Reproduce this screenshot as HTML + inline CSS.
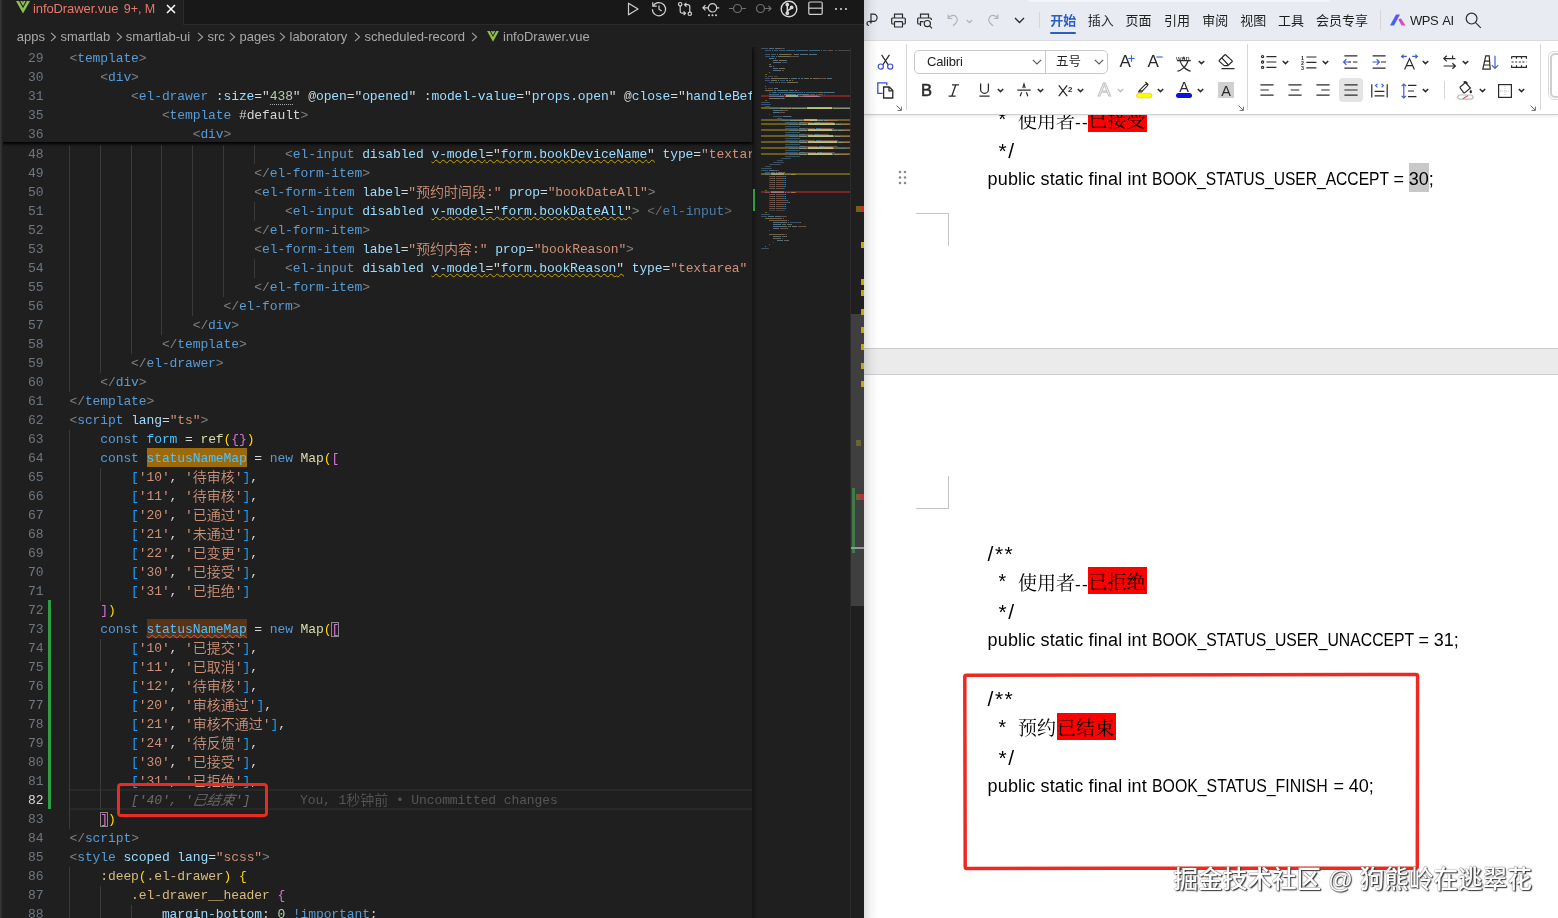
<!DOCTYPE html>
<html lang="zh-CN">
<head>
<meta charset="utf-8">
<title>infoDrawer.vue</title>
<style>
*{box-sizing:border-box;margin:0;padding:0}
html,body{width:1558px;height:918px;overflow:hidden;background:#fff}
body{position:relative;font-family:"Liberation Sans","Noto Sans CJK SC",sans-serif}
#vs,#wps{will-change:transform}
/* ---------- VS Code ---------- */
#vs{position:absolute;left:0;top:0;width:864px;height:918px;background:#1f1f1f;overflow:hidden;color:#d4d4d4}
#vs .edge{position:absolute;left:0;top:0;width:2.5px;height:918px;background:linear-gradient(90deg,#383838 0,#2c2c2c 50%,#222 80%,#1f1f1f 100%);z-index:9}
#tabs{z-index:6;position:absolute;left:0;top:-10px;width:864px;height:35px;background:#181818;border-bottom:1px solid #2b2b2b}
#tab{position:absolute;left:2px;top:0;width:182px;height:35px;background:#1f1f1f;border-right:1px solid #2b2b2b}
#tab .nm{position:absolute;left:31px;top:9.5px;font-size:13px;line-height:17px;color:#e8796d;white-space:nowrap;letter-spacing:-0.1px}
#tab .x{position:absolute;left:163.5px;top:13.5px}
#crumbs{z-index:6;position:absolute;left:0;top:25px;width:864px;height:22px;background:#1f1f1f;font-size:13px;line-height:23px;color:#a9a9a9;white-space:nowrap}
#crumbs span{position:absolute;top:0}
#crumbs svg{position:absolute}
#editor{position:absolute;left:0;top:0;width:752px;height:918px;overflow:hidden}
.row{position:absolute;left:0;width:760px;height:19px;line-height:19px;font-family:"Liberation Mono","Noto Sans CJK SC",monospace;font-size:13px;letter-spacing:-0.1px;white-space:pre}
.ln{position:absolute;left:0;width:43.5px;text-align:right;color:#6e7681}
.ln.cur{color:#d6d6d6}
.code{position:absolute;top:0}
.z{font-family:"Noto Sans CJK SC",sans-serif;font-weight:350;font-size:14px;letter-spacing:0;display:inline-block;line-height:19px;vertical-align:top;position:relative;top:-1.5px}
.g{color:#808080}.t{color:#569cd6}.a{color:#9cdcfe}.a2{color:#d4d4d4}.s{color:#ce9178}.w{color:#d4d4d4}
.g2{color:#6a6a6a}.t2{color:#4a7fae}
.k{color:#569cd6}.v{color:#4fc1ff}.f{color:#dcdcaa}.nu{color:#b5cea8}
.b1{color:#ffd700}.b2{color:#da70d6}.b3{color:#179fff}
.se{color:#d7ba7d}
.sq{color:#9cdcfe}
.gh{color:#6c6c6c;font-style:italic}
.gh .z{transform:skewX(-12deg)}
.gd{position:absolute;width:1px;background:#3a3a3a}
#sticky{position:absolute;left:2px;top:47px;width:750px;height:95px;background:#1f1f1f;box-shadow:0 2px 3px 0 #000;z-index:5;overflow:hidden}
#sticky .row{left:-2px}

.h1{background:#9c6a0a;padding:3.1px 0 1.2px}
.h2{padding:3.1px 0 1.2px;background:#5a3316;text-decoration:underline wavy #f14c4c 1px;text-underline-offset:1px;text-decoration-skip-ink:none}
.bm{outline:1px solid #888;outline-offset:-1px}
.sq{text-decoration:underline wavy #cca700 1px;text-underline-offset:.5px;text-decoration-skip-ink:none}
.nu.dot{border-bottom:1px dotted #aaa}
#curline{position:absolute;left:70px;top:789px;width:682px;height:21px;border-top:2px solid #282828;border-bottom:2px solid #282828}
#gitbar{position:absolute;left:48px;top:600px;width:3px;height:209px;background:#2ea043}
#blame{color:#565656;position:absolute;left:300px;top:0}
#redbox{position:absolute;left:116.5px;top:783px;width:151px;height:33.5px;border:3px solid #ec2a22;border-radius:4px;z-index:4}
#mini{position:absolute;left:752px;top:47px;width:98px;height:871px;background:#1f1f1f}
#mini .sh{position:absolute;left:0;top:0;width:6px;height:871px;background:linear-gradient(90deg,#000 0,#1f1f1f00 100%);opacity:.3}
#mini svg{position:absolute;left:9px;top:0}
#vscroll{position:absolute;left:850px;top:47px;width:14px;height:871px;background:#1f1f1f;border-left:1px solid #2b2b2b}
#vscroll i{position:absolute;display:block}
#vscroll .sl{left:0;top:267px;width:14px;height:292px;background:#4b4b4b;opacity:.75}
#tools{position:absolute;left:0;top:.5px}
#tools svg{position:absolute;top:0;overflow:visible}

/* ---------- WPS ---------- */
#wps{position:absolute;left:864px;top:0;width:694px;height:918px;background:#fff;overflow:hidden;color:#1a1a1a}
#wps svg{position:absolute;overflow:visible}
#wps .lsh{position:absolute;left:0;top:0;width:14px;height:918px;background:linear-gradient(90deg,rgba(0,0,0,.13),rgba(0,0,0,.04) 50%,rgba(0,0,0,0));z-index:20}
#wmenu{position:absolute;left:0;top:0;width:694px;height:39.5px;background:#e9ebf2;z-index:12}
#wmenu .mi{position:absolute;top:10.5px;font-size:13px;line-height:20px;color:#1f1f1f;white-space:nowrap;font-family:"Liberation Sans","Noto Sans CJK SC",sans-serif}
#wmenu .mi.act{color:#2b5fc7;font-weight:700}
.vsep{position:absolute;display:block;width:1px;background:#d6d6da}
#ribbon{position:absolute;left:0;top:39.5px;width:694px;height:75px;background:#fff;border-bottom:1px solid #cfcfcf;border-top:1px solid #d9dade;z-index:11;box-shadow:0 1px 3px rgba(0,0,0,.10)}
#ribbon>*{margin-top:-40.5px}
#ribbon .fbox{position:absolute;border:1px solid #c9c9c9;border-radius:5px;background:#fff}
#ribbon .fbox *{margin-top:0}
.gl{position:absolute;line-height:22px;color:#2b2b2b;white-space:nowrap}
#doc{position:absolute;left:0;top:0;width:694px;height:918px;background:#fff;z-index:1}
#doc .gap{position:absolute;left:0;top:348px;width:694px;height:27px;background:#ebebeb;border-top:1px solid #cdcdcd;border-bottom:1px solid #cdcdcd}
#doc .cm{position:absolute;display:block;background:#c4c4c4}
.dl{position:absolute;left:0;width:694px;height:29px;line-height:29px;font-size:18px;color:#000;white-space:pre}
.dl span{position:absolute;top:0}
.dl span span{position:static}
.lc{letter-spacing:.138px}
.uc{letter-spacing:0;display:inline-block;transform-origin:0 50%;transform:scaleX(.8668)}
.eq{letter-spacing:-.1px}
.sy{letter-spacing:1.5px;font-size:21px;margin-top:1.2px}
.st{font-size:19.5px;margin-top:.5px}
.cj{font-family:"Noto Serif CJK SC","Noto Sans CJK SC",serif;font-size:19px;letter-spacing:0}
.cj .dash{font-family:"Liberation Sans",sans-serif;font-size:17px;letter-spacing:1.4px}
.hl{background:#ff0000;height:27px;line-height:28px;top:.3px !important;padding:0 1.6px 0 .4px}
.sel{background:#c8c8c8;padding:5.6px .2px 3.600px .2px;margin:0 -.2px}
#wm{position:absolute;left:309.5px;top:864.2px;font-size:24.6px;line-height:32px;white-space:nowrap;color:#fff;font-family:"Liberation Sans","Noto Sans CJK SC",sans-serif;font-weight:500;text-shadow:1.2px 1.2px 1.2px #333,0 0 1.2px #666,0 0 1px #888;letter-spacing:0}
</style>
</head>
<body>
<div id="vs">
<div class="edge"></div>
<div id="editor">
<div id="curline"></div><div id="gitbar"></div>
<i class="gd" style="left:69px;top:145px;height:247px"></i><i class="gd" style="left:69px;top:430px;height:399px"></i><i class="gd" style="left:69px;top:867px;height:57px"></i><i class="gd" style="left:100px;top:145px;height:228px"></i><i class="gd" style="left:100px;top:468px;height:133px"></i><i class="gd" style="left:100px;top:639px;height:171px"></i><i class="gd" style="left:100px;top:886px;height:38px"></i><i class="gd" style="left:131px;top:145px;height:209px"></i><i class="gd" style="left:131px;top:905px;height:19px"></i><i class="gd" style="left:161px;top:145px;height:190px"></i><i class="gd" style="left:192px;top:145px;height:171px"></i><i class="gd" style="left:223px;top:145px;height:152px"></i><i class="gd" style="left:254px;top:145px;height:19px"></i><i class="gd" style="left:254px;top:202px;height:19px"></i><i class="gd" style="left:254px;top:259px;height:19px"></i>

<div class="row" style="top:145px"><span class="ln">48</span><span class="code" style="left:285.1px"><span class="g">&lt;</span><span class="t">el-input</span><span class="w"> </span><span class="a">disabled</span><span class="w"> </span><span class="sq"><span class="a">v-model</span><span class="w">="</span><span class="a">form.bookDeviceName</span><span class="w">"</span></span><span class="w"> </span><span class="a">type</span><span class="w">=</span><span class="s">"textar</span></span></div>
<div class="row" style="top:164px"><span class="ln">49</span><span class="code" style="left:254.3px"><span class="g">&lt;/</span><span class="t">el-form-item</span><span class="g">&gt;</span></span></div>
<div class="row" style="top:183px"><span class="ln">50</span><span class="code" style="left:254.3px"><span class="g">&lt;</span><span class="t">el-form-item</span><span class="w"> </span><span class="a">label</span><span class="w">=</span><span class="s">"<span class="z">预约时间段</span>:"</span><span class="w"> </span><span class="a">prop</span><span class="w">=</span><span class="s">"bookDateAll"</span><span class="g">&gt;</span></span></div>
<div class="row" style="top:202px"><span class="ln">51</span><span class="code" style="left:285.1px"><span class="g">&lt;</span><span class="t">el-input</span><span class="w"> </span><span class="a">disabled</span><span class="w"> </span><span class="sq"><span class="a">v-model</span><span class="w">="</span><span class="a">form.bookDateAll</span><span class="w">"</span></span><span class="g">&gt;</span><span class="w"> </span><span class="g2">&lt;/</span><span class="t2">el-input</span><span class="g2">&gt;</span></span></div>
<div class="row" style="top:221px"><span class="ln">52</span><span class="code" style="left:254.3px"><span class="g">&lt;/</span><span class="t">el-form-item</span><span class="g">&gt;</span></span></div>
<div class="row" style="top:240px"><span class="ln">53</span><span class="code" style="left:254.3px"><span class="g">&lt;</span><span class="t">el-form-item</span><span class="w"> </span><span class="a">label</span><span class="w">=</span><span class="s">"<span class="z">预约内容</span>:"</span><span class="w"> </span><span class="a">prop</span><span class="w">=</span><span class="s">"bookReason"</span><span class="g">&gt;</span></span></div>
<div class="row" style="top:259px"><span class="ln">54</span><span class="code" style="left:285.1px"><span class="g">&lt;</span><span class="t">el-input</span><span class="w"> </span><span class="a">disabled</span><span class="w"> </span><span class="sq"><span class="a">v-model</span><span class="w">="</span><span class="a">form.bookReason</span><span class="w">"</span></span><span class="w"> </span><span class="a">type</span><span class="w">=</span><span class="s">"textarea"</span></span></div>
<div class="row" style="top:278px"><span class="ln">55</span><span class="code" style="left:254.3px"><span class="g">&lt;/</span><span class="t">el-form-item</span><span class="g">&gt;</span></span></div>
<div class="row" style="top:297px"><span class="ln">56</span><span class="code" style="left:223.5px"><span class="g">&lt;/</span><span class="t">el-form</span><span class="g">&gt;</span></span></div>
<div class="row" style="top:316px"><span class="ln">57</span><span class="code" style="left:192.7px"><span class="g">&lt;/</span><span class="t">div</span><span class="g">&gt;</span></span></div>
<div class="row" style="top:335px"><span class="ln">58</span><span class="code" style="left:161.9px"><span class="g">&lt;/</span><span class="t">template</span><span class="g">&gt;</span></span></div>
<div class="row" style="top:354px"><span class="ln">59</span><span class="code" style="left:131.1px"><span class="g">&lt;/</span><span class="t">el-drawer</span><span class="g">&gt;</span></span></div>
<div class="row" style="top:373px"><span class="ln">60</span><span class="code" style="left:100.3px"><span class="g">&lt;/</span><span class="t">div</span><span class="g">&gt;</span></span></div>
<div class="row" style="top:392px"><span class="ln">61</span><span class="code" style="left:69.5px"><span class="g">&lt;/</span><span class="t">template</span><span class="g">&gt;</span></span></div>
<div class="row" style="top:411px"><span class="ln">62</span><span class="code" style="left:69.5px"><span class="g">&lt;</span><span class="t">script</span><span class="w"> </span><span class="a">lang</span><span class="w">=</span><span class="s">"ts"</span><span class="g">&gt;</span></span></div>
<div class="row" style="top:430px"><span class="ln">63</span><span class="code" style="left:100.3px"><span class="k">const</span><span class="w"> </span><span class="v">form</span><span class="w"> = </span><span class="f">ref</span><span class="b1">(</span><span class="b2">{}</span><span class="b1">)</span></span></div>
<div class="row" style="top:449px"><span class="ln">64</span><span class="code" style="left:100.3px"><span class="k">const</span><span class="w"> </span><span class="v h1">statusNameMap</span><span class="w"> = </span><span class="k">new</span><span class="w"> </span><span class="f">Map</span><span class="b1">(</span><span class="b2">[</span></span></div>
<div class="row" style="top:468px"><span class="ln">65</span><span class="code" style="left:131.1px"><span class="b3">[</span><span class="s">'10'</span><span class="w">, </span><span class="s">'<span class="z">待审核</span>'</span><span class="b3">]</span><span class="w">,</span></span></div>
<div class="row" style="top:487px"><span class="ln">66</span><span class="code" style="left:131.1px"><span class="b3">[</span><span class="s">'11'</span><span class="w">, </span><span class="s">'<span class="z">待审核</span>'</span><span class="b3">]</span><span class="w">,</span></span></div>
<div class="row" style="top:506px"><span class="ln">67</span><span class="code" style="left:131.1px"><span class="b3">[</span><span class="s">'20'</span><span class="w">, </span><span class="s">'<span class="z">已通过</span>'</span><span class="b3">]</span><span class="w">,</span></span></div>
<div class="row" style="top:525px"><span class="ln">68</span><span class="code" style="left:131.1px"><span class="b3">[</span><span class="s">'21'</span><span class="w">, </span><span class="s">'<span class="z">未通过</span>'</span><span class="b3">]</span><span class="w">,</span></span></div>
<div class="row" style="top:544px"><span class="ln">69</span><span class="code" style="left:131.1px"><span class="b3">[</span><span class="s">'22'</span><span class="w">, </span><span class="s">'<span class="z">已变更</span>'</span><span class="b3">]</span><span class="w">,</span></span></div>
<div class="row" style="top:563px"><span class="ln">70</span><span class="code" style="left:131.1px"><span class="b3">[</span><span class="s">'30'</span><span class="w">, </span><span class="s">'<span class="z">已接受</span>'</span><span class="b3">]</span><span class="w">,</span></span></div>
<div class="row" style="top:582px"><span class="ln">71</span><span class="code" style="left:131.1px"><span class="b3">[</span><span class="s">'31'</span><span class="w">, </span><span class="s">'<span class="z">已拒绝</span>'</span><span class="b3">]</span></span></div>
<div class="row" style="top:601px"><span class="ln">72</span><span class="code" style="left:100.3px"><span class="b2">]</span><span class="b1">)</span></span></div>
<div class="row" style="top:620px"><span class="ln">73</span><span class="code" style="left:100.3px"><span class="k">const</span><span class="w"> </span><span class="v h2">statusNameMap</span><span class="w"> = </span><span class="k">new</span><span class="w"> </span><span class="f">Map</span><span class="b1">(</span><span class="b2 bm">[</span></span></div>
<div class="row" style="top:639px"><span class="ln">74</span><span class="code" style="left:131.1px"><span class="b3">[</span><span class="s">'10'</span><span class="w">, </span><span class="s">'<span class="z">已提交</span>'</span><span class="b3">]</span><span class="w">,</span></span></div>
<div class="row" style="top:658px"><span class="ln">75</span><span class="code" style="left:131.1px"><span class="b3">[</span><span class="s">'11'</span><span class="w">, </span><span class="s">'<span class="z">已取消</span>'</span><span class="b3">]</span><span class="w">,</span></span></div>
<div class="row" style="top:677px"><span class="ln">76</span><span class="code" style="left:131.1px"><span class="b3">[</span><span class="s">'12'</span><span class="w">, </span><span class="s">'<span class="z">待审核</span>'</span><span class="b3">]</span><span class="w">,</span></span></div>
<div class="row" style="top:696px"><span class="ln">77</span><span class="code" style="left:131.1px"><span class="b3">[</span><span class="s">'20'</span><span class="w">, </span><span class="s">'<span class="z">审核通过</span>'</span><span class="b3">]</span><span class="w">,</span></span></div>
<div class="row" style="top:715px"><span class="ln">78</span><span class="code" style="left:131.1px"><span class="b3">[</span><span class="s">'21'</span><span class="w">, </span><span class="s">'<span class="z">审核不通过</span>'</span><span class="b3">]</span><span class="w">,</span></span></div>
<div class="row" style="top:734px"><span class="ln">79</span><span class="code" style="left:131.1px"><span class="b3">[</span><span class="s">'24'</span><span class="w">, </span><span class="s">'<span class="z">待反馈</span>'</span><span class="b3">]</span><span class="w">,</span></span></div>
<div class="row" style="top:753px"><span class="ln">80</span><span class="code" style="left:131.1px"><span class="b3">[</span><span class="s">'30'</span><span class="w">, </span><span class="s">'<span class="z">已接受</span>'</span><span class="b3">]</span><span class="w">,</span></span></div>
<div class="row" style="top:772px"><span class="ln">81</span><span class="code" style="left:131.1px"><span class="b3">[</span><span class="s">'31'</span><span class="w">, </span><span class="s">'<span class="z">已拒绝</span>'</span><span class="b3">]</span><span class="w">,</span></span></div>
<div class="row" style="top:791px"><span class="ln cur">82</span><span class="code" style="left:131.1px"><span class="gh">['40', '<span class="z">已结束</span>']</span></span><span id="blame">You, 1<span class="z">秒钟前</span> • Uncommitted changes</span></div>
<div class="row" style="top:810px"><span class="ln">83</span><span class="code" style="left:100.3px"><span class="b2 bm">]</span><span class="b1">)</span></span></div>
<div class="row" style="top:829px"><span class="ln">84</span><span class="code" style="left:69.5px"><span class="g">&lt;/</span><span class="t">script</span><span class="g">&gt;</span></span></div>
<div class="row" style="top:848px"><span class="ln">85</span><span class="code" style="left:69.5px"><span class="g">&lt;</span><span class="t">style</span><span class="w"> </span><span class="a">scoped</span><span class="w"> </span><span class="a">lang</span><span class="w">=</span><span class="s">"scss"</span><span class="g">&gt;</span></span></div>
<div class="row" style="top:867px"><span class="ln">86</span><span class="code" style="left:100.3px"><span class="se">:deep</span><span class="b1">(</span><span class="se">.el-drawer</span><span class="b1">)</span><span class="w"> </span><span class="b1">{</span></span></div>
<div class="row" style="top:886px"><span class="ln">87</span><span class="code" style="left:131.1px"><span class="se">.el-drawer__header</span><span class="w"> </span><span class="b2">{</span></span></div>
<div class="row" style="top:905px"><span class="ln">88</span><span class="code" style="left:161.9px"><span class="a">margin-bottom</span><span class="w">: </span><span class="nu">0</span><span class="w"> </span><span class="k">!important</span><span class="w">;</span></span></div>

</div>
<div id="redbox"></div>
<div id="mini"><div class="sh"></div><svg width="89" height="210" viewBox="0 0 89 210" shape-rendering="crispEdges"><rect x="0" y="48" width="89" height="2" fill="#c22" opacity=".55"/><rect x="25" y="48" width="12" height="2" fill="#e0a030" opacity=".9"/><rect x="42" y="48" width="15" height="2" fill="#e03030" opacity=".9"/><rect x="0" y="60" width="89" height="2" fill="#a89020" opacity=".55"/><rect x="46" y="60" width="25" height="2" fill="#e0b828" opacity=".9"/><rect x="0" y="72" width="89" height="2" fill="#a89020" opacity=".55"/><rect x="43" y="72" width="13" height="2" fill="#e0b828" opacity=".9"/><rect x="0" y="76" width="89" height="2" fill="#a89020" opacity=".55"/><rect x="47" y="76" width="27" height="2" fill="#e0b828" opacity=".9"/><rect x="0" y="82" width="89" height="2" fill="#a89020" opacity=".55"/><rect x="47" y="82" width="24" height="2" fill="#e0b828" opacity=".9"/><rect x="0" y="88" width="89" height="2" fill="#a89020" opacity=".55"/><rect x="47" y="88" width="25" height="2" fill="#e0b828" opacity=".9"/><rect x="0" y="94" width="89" height="2" fill="#a89020" opacity=".55"/><rect x="47" y="94" width="29" height="2" fill="#e0b828" opacity=".9"/><rect x="0" y="100" width="89" height="2" fill="#a89020" opacity=".55"/><rect x="47" y="100" width="25" height="2" fill="#e0b828" opacity=".9"/><rect x="0" y="106" width="89" height="2" fill="#a89020" opacity=".55"/><rect x="47" y="106" width="24" height="2" fill="#e0b828" opacity=".9"/><rect x="0" y="126" width="89" height="2" fill="#a89020" opacity=".55"/><rect x="10" y="126" width="13" height="2" fill="#e08a20" opacity=".9"/><rect x="0" y="144" width="89" height="2" fill="#c22" opacity=".55"/><rect x="10" y="144" width="13" height="2" fill="#e04a30" opacity=".9"/><g opacity=".42"><rect x="0" y="0.5" width="1" height="1" fill="#808080"/><rect x="1" y="0.5" width="6" height="1" fill="#569cd6"/><rect x="8" y="0.5" width="5" height="1" fill="#9cdcfe"/><rect x="14" y="0.5" width="4" height="1" fill="#9cdcfe"/><rect x="18" y="0.5" width="1" height="1" fill="#d4d4d4"/><rect x="19" y="0.5" width="4" height="1" fill="#ce9178"/><rect x="23" y="0.5" width="1" height="1" fill="#808080"/><rect x="4" y="2.5" width="6" height="1" fill="#569cd6"/><rect x="11" y="2.5" width="1" height="1" fill="#d4d4d4"/><rect x="13" y="2.5" width="4" height="1" fill="#4fc1ff"/><rect x="18" y="2.5" width="6" height="1" fill="#4fc1ff"/><rect x="25" y="2.5" width="9" height="1" fill="#4fc1ff"/><rect x="35" y="2.5" width="12" height="1" fill="#4fc1ff"/><rect x="48" y="2.5" width="11" height="1" fill="#4fc1ff"/><rect x="60" y="2.5" width="1" height="1" fill="#d4d4d4"/><rect x="62" y="2.5" width="4" height="1" fill="#569cd6"/><rect x="67" y="2.5" width="5" height="1" fill="#ce9178"/><rect x="74" y="2.5" width="2" height="1" fill="#808080"/><rect x="77" y="2.5" width="12" height="1" fill="#808080"/><rect x="4" y="6.5" width="5" height="1" fill="#569cd6"/><rect x="10" y="6.5" width="5" height="1" fill="#4fc1ff"/><rect x="16" y="6.5" width="1" height="1" fill="#d4d4d4"/><rect x="18" y="6.5" width="11" height="1" fill="#dcdcaa"/><rect x="29" y="6.5" width="1" height="1" fill="#ffd700"/><rect x="30" y="6.5" width="1" height="1" fill="#da70d6"/><rect x="33" y="6.5" width="5" height="1" fill="#9cdcfe"/><rect x="39" y="6.5" width="8" height="1" fill="#9cdcfe"/><rect x="48" y="6.5" width="8" height="1" fill="#9cdcfe"/><rect x="4" y="8.5" width="5" height="1" fill="#569cd6"/><rect x="10" y="8.5" width="4" height="1" fill="#4fc1ff"/><rect x="15" y="8.5" width="1" height="1" fill="#d4d4d4"/><rect x="17" y="8.5" width="11" height="1" fill="#dcdcaa"/><rect x="28" y="8.5" width="1" height="1" fill="#ffd700"/><rect x="29" y="8.5" width="9" height="1" fill="#ce9178"/><rect x="8" y="10.5" width="4" height="1" fill="#9cdcfe"/><rect x="12" y="10.5" width="1" height="1" fill="#d4d4d4"/><rect x="14" y="10.5" width="1" height="1" fill="#ffd700"/><rect x="12" y="12.5" width="4" height="1" fill="#9cdcfe"/><rect x="16" y="12.5" width="1" height="1" fill="#d4d4d4"/><rect x="18" y="12.5" width="7" height="1" fill="#dcdcaa"/><rect x="25" y="12.5" width="1" height="1" fill="#d4d4d4"/><rect x="12" y="14.5" width="7" height="1" fill="#9cdcfe"/><rect x="19" y="14.5" width="1" height="1" fill="#d4d4d4"/><rect x="21" y="14.5" width="5" height="1" fill="#569cd6"/><rect x="8" y="16.5" width="1" height="1" fill="#ffd700"/><rect x="9" y="16.5" width="1" height="1" fill="#d4d4d4"/><rect x="8" y="18.5" width="2" height="1" fill="#9cdcfe"/><rect x="10" y="18.5" width="1" height="1" fill="#d4d4d4"/><rect x="12" y="18.5" width="1" height="1" fill="#ffd700"/><rect x="12" y="20.5" width="4" height="1" fill="#9cdcfe"/><rect x="16" y="20.5" width="1" height="1" fill="#d4d4d4"/><rect x="18" y="20.5" width="6" height="1" fill="#dcdcaa"/><rect x="12" y="22.5" width="7" height="1" fill="#9cdcfe"/><rect x="19" y="22.5" width="1" height="1" fill="#d4d4d4"/><rect x="21" y="22.5" width="2" height="1" fill="#ce9178"/><rect x="8" y="24.5" width="1" height="1" fill="#ffd700"/><rect x="4" y="26.5" width="1" height="1" fill="#da70d6"/><rect x="5" y="26.5" width="1" height="1" fill="#ffd700"/><rect x="4" y="28.5" width="2" height="1" fill="#808080"/><rect x="7" y="28.5" width="5" height="1" fill="#808080"/><rect x="13" y="28.5" width="4" height="1" fill="#808080"/><rect x="4" y="30.5" width="5" height="1" fill="#569cd6"/><rect x="10" y="30.5" width="17" height="1" fill="#dcdcaa"/><rect x="28" y="30.5" width="1" height="1" fill="#d4d4d4"/><rect x="30" y="30.5" width="1" height="1" fill="#ffd700"/><rect x="31" y="30.5" width="5" height="1" fill="#9cdcfe"/><rect x="37" y="30.5" width="2" height="1" fill="#9cdcfe"/><rect x="40" y="30.5" width="2" height="1" fill="#9cdcfe"/><rect x="43" y="30.5" width="4" height="1" fill="#9cdcfe"/><rect x="47" y="30.5" width="1" height="1" fill="#ffd700"/><rect x="49" y="30.5" width="2" height="1" fill="#d4d4d4"/><rect x="52" y="30.5" width="4" height="1" fill="#dcdcaa"/><rect x="56" y="30.5" width="1" height="1" fill="#ffd700"/><rect x="57" y="30.5" width="7" height="1" fill="#ce9178"/><rect x="64" y="30.5" width="1" height="1" fill="#d4d4d4"/><rect x="66" y="30.5" width="4" height="1" fill="#9cdcfe"/><rect x="70" y="30.5" width="1" height="1" fill="#ffd700"/><rect x="4" y="32.5" width="5" height="1" fill="#569cd6"/><rect x="10" y="32.5" width="6" height="1" fill="#dcdcaa"/><rect x="17" y="32.5" width="1" height="1" fill="#d4d4d4"/><rect x="19" y="32.5" width="5" height="1" fill="#569cd6"/><rect x="25" y="32.5" width="2" height="1" fill="#d4d4d4"/><rect x="28" y="32.5" width="2" height="1" fill="#d4d4d4"/><rect x="31" y="32.5" width="1" height="1" fill="#ffd700"/><rect x="8" y="34.5" width="5" height="1" fill="#569cd6"/><rect x="14" y="34.5" width="3" height="1" fill="#4fc1ff"/><rect x="18" y="34.5" width="1" height="1" fill="#d4d4d4"/><rect x="20" y="34.5" width="5" height="1" fill="#569cd6"/><rect x="26" y="34.5" width="7" height="1" fill="#dcdcaa"/><rect x="33" y="34.5" width="1" height="1" fill="#ffd700"/><rect x="34" y="34.5" width="2" height="1" fill="#9cdcfe"/><rect x="36" y="34.5" width="1" height="1" fill="#ffd700"/><rect x="4" y="38.5" width="1" height="1" fill="#ffd700"/><rect x="4" y="40.5" width="2" height="1" fill="#808080"/><rect x="7" y="40.5" width="5" height="1" fill="#808080"/><rect x="13" y="40.5" width="4" height="1" fill="#9cdcfe"/><rect x="4" y="42.5" width="5" height="1" fill="#dcdcaa"/><rect x="9" y="42.5" width="1" height="1" fill="#ffd700"/><rect x="10" y="42.5" width="2" height="1" fill="#d4d4d4"/><rect x="13" y="42.5" width="2" height="1" fill="#d4d4d4"/><rect x="16" y="42.5" width="10" height="1" fill="#9cdcfe"/><rect x="26" y="42.5" width="1" height="1" fill="#d4d4d4"/><rect x="28" y="42.5" width="1" height="1" fill="#da70d6"/><rect x="29" y="42.5" width="3" height="1" fill="#9cdcfe"/><rect x="32" y="42.5" width="1" height="1" fill="#da70d6"/><rect x="34" y="42.5" width="2" height="1" fill="#d4d4d4"/><rect x="37" y="42.5" width="1" height="1" fill="#da70d6"/><rect x="8" y="44.5" width="2" height="1" fill="#569cd6"/><rect x="11" y="44.5" width="1" height="1" fill="#179fff"/><rect x="12" y="44.5" width="3" height="1" fill="#9cdcfe"/><rect x="15" y="44.5" width="1" height="1" fill="#179fff"/><rect x="17" y="44.5" width="25" height="1" fill="#4fc1ff"/><rect x="43" y="44.5" width="1" height="1" fill="#d4d4d4"/><rect x="45" y="44.5" width="13" height="1" fill="#4fc1ff"/><rect x="58" y="44.5" width="1" height="1" fill="#d4d4d4"/><rect x="59" y="44.5" width="3" height="1" fill="#dcdcaa"/><rect x="62" y="44.5" width="1" height="1" fill="#179fff"/><rect x="63" y="44.5" width="10" height="1" fill="#9cdcfe"/><rect x="73" y="44.5" width="1" height="1" fill="#179fff"/><rect x="8" y="46.5" width="10" height="1" fill="#4fc1ff"/><rect x="19" y="46.5" width="1" height="1" fill="#d4d4d4"/><rect x="21" y="46.5" width="1" height="1" fill="#179fff"/><rect x="23" y="46.5" width="3" height="1" fill="#d4d4d4"/><rect x="26" y="46.5" width="8" height="1" fill="#9cdcfe"/><rect x="34" y="46.5" width="1" height="1" fill="#d4d4d4"/><rect x="36" y="46.5" width="11" height="1" fill="#9cdcfe"/><rect x="47" y="46.5" width="1" height="1" fill="#d4d4d4"/><rect x="49" y="46.5" width="5" height="1" fill="#ce9178"/><rect x="55" y="46.5" width="1" height="1" fill="#ce9178"/><rect x="57" y="46.5" width="5" height="1" fill="#ce9178"/><rect x="63" y="46.5" width="1" height="1" fill="#179fff"/><rect x="8" y="48.5" width="10" height="1" fill="#4fc1ff"/><rect x="18" y="48.5" width="1" height="1" fill="#d4d4d4"/><rect x="19" y="48.5" width="4" height="1" fill="#9cdcfe"/><rect x="24" y="48.5" width="1" height="1" fill="#d4d4d4"/><rect x="26" y="48.5" width="13" height="1" fill="#4fc1ff"/><rect x="39" y="48.5" width="1" height="1" fill="#d4d4d4"/><rect x="40" y="48.5" width="3" height="1" fill="#dcdcaa"/><rect x="43" y="48.5" width="1" height="1" fill="#179fff"/><rect x="44" y="48.5" width="15" height="1" fill="#9cdcfe"/><rect x="59" y="48.5" width="1" height="1" fill="#179fff"/><rect x="8" y="50.5" width="11" height="1" fill="#dcdcaa"/><rect x="19" y="50.5" width="1" height="1" fill="#179fff"/><rect x="20" y="50.5" width="3" height="1" fill="#9cdcfe"/><rect x="23" y="50.5" width="1" height="1" fill="#179fff"/><rect x="4" y="52.5" width="1" height="1" fill="#da70d6"/><rect x="5" y="52.5" width="1" height="1" fill="#ffd700"/><rect x="0" y="54.5" width="2" height="1" fill="#808080"/><rect x="2" y="54.5" width="6" height="1" fill="#569cd6"/><rect x="8" y="54.5" width="1" height="1" fill="#808080"/><rect x="0" y="56.5" width="1" height="1" fill="#808080"/><rect x="1" y="56.5" width="8" height="1" fill="#569cd6"/><rect x="9" y="56.5" width="1" height="1" fill="#808080"/><rect x="4" y="58.5" width="1" height="1" fill="#808080"/><rect x="5" y="58.5" width="3" height="1" fill="#569cd6"/><rect x="8" y="58.5" width="1" height="1" fill="#808080"/><rect x="8" y="60.5" width="1" height="1" fill="#808080"/><rect x="9" y="60.5" width="9" height="1" fill="#569cd6"/><rect x="19" y="60.5" width="5" height="1" fill="#9cdcfe"/><rect x="24" y="60.5" width="2" height="1" fill="#d4d4d4"/><rect x="26" y="60.5" width="3" height="1" fill="#b5cea8"/><rect x="29" y="60.5" width="1" height="1" fill="#d4d4d4"/><rect x="31" y="60.5" width="1" height="1" fill="#d4d4d4"/><rect x="32" y="60.5" width="4" height="1" fill="#9cdcfe"/><rect x="36" y="60.5" width="2" height="1" fill="#d4d4d4"/><rect x="38" y="60.5" width="6" height="1" fill="#9cdcfe"/><rect x="44" y="60.5" width="1" height="1" fill="#d4d4d4"/><rect x="46" y="60.5" width="12" height="1" fill="#9cdcfe"/><rect x="58" y="60.5" width="2" height="1" fill="#d4d4d4"/><rect x="60" y="60.5" width="10" height="1" fill="#9cdcfe"/><rect x="70" y="60.5" width="1" height="1" fill="#d4d4d4"/><rect x="72" y="60.5" width="1" height="1" fill="#d4d4d4"/><rect x="73" y="60.5" width="5" height="1" fill="#9cdcfe"/><rect x="78" y="60.5" width="2" height="1" fill="#d4d4d4"/><rect x="80" y="60.5" width="9" height="1" fill="#9cdcfe"/><rect x="12" y="62.5" width="9" height="1" fill="#9cdcfe"/><rect x="21" y="62.5" width="1" height="1" fill="#d4d4d4"/><rect x="22" y="62.5" width="5" height="1" fill="#ce9178"/><rect x="12" y="64.5" width="5" height="1" fill="#9cdcfe"/><rect x="17" y="64.5" width="1" height="1" fill="#d4d4d4"/><rect x="18" y="64.5" width="6" height="1" fill="#ce9178"/><rect x="8" y="66.5" width="1" height="1" fill="#808080"/><rect x="12" y="68.5" width="1" height="1" fill="#808080"/><rect x="13" y="68.5" width="8" height="1" fill="#569cd6"/><rect x="22" y="68.5" width="1" height="1" fill="#d4d4d4"/><rect x="23" y="68.5" width="7" height="1" fill="#9cdcfe"/><rect x="30" y="68.5" width="1" height="1" fill="#808080"/><rect x="16" y="70.5" width="1" height="1" fill="#808080"/><rect x="17" y="70.5" width="3" height="1" fill="#569cd6"/><rect x="20" y="70.5" width="1" height="1" fill="#808080"/><rect x="20" y="72.5" width="1" height="1" fill="#808080"/><rect x="21" y="72.5" width="7" height="1" fill="#569cd6"/><rect x="29" y="72.5" width="11" height="1" fill="#9cdcfe"/><rect x="40" y="72.5" width="1" height="1" fill="#d4d4d4"/><rect x="41" y="72.5" width="7" height="1" fill="#ce9178"/><rect x="49" y="72.5" width="6" height="1" fill="#9cdcfe"/><rect x="55" y="72.5" width="1" height="1" fill="#d4d4d4"/><rect x="56" y="72.5" width="6" height="1" fill="#9cdcfe"/><rect x="63" y="72.5" width="3" height="1" fill="#9cdcfe"/><rect x="66" y="72.5" width="1" height="1" fill="#d4d4d4"/><rect x="67" y="72.5" width="9" height="1" fill="#ce9178"/><rect x="76" y="72.5" width="1" height="1" fill="#808080"/><rect x="24" y="74.5" width="1" height="1" fill="#808080"/><rect x="25" y="74.5" width="12" height="1" fill="#569cd6"/><rect x="38" y="74.5" width="5" height="1" fill="#9cdcfe"/><rect x="43" y="74.5" width="1" height="1" fill="#d4d4d4"/><rect x="44" y="74.5" width="8" height="1" fill="#ce9178"/><rect x="53" y="74.5" width="4" height="1" fill="#9cdcfe"/><rect x="57" y="74.5" width="1" height="1" fill="#d4d4d4"/><rect x="58" y="74.5" width="14" height="1" fill="#ce9178"/><rect x="72" y="74.5" width="1" height="1" fill="#808080"/><rect x="28" y="76.5" width="1" height="1" fill="#808080"/><rect x="29" y="76.5" width="8" height="1" fill="#569cd6"/><rect x="38" y="76.5" width="8" height="1" fill="#9cdcfe"/><rect x="47" y="76.5" width="7" height="1" fill="#9cdcfe"/><rect x="54" y="76.5" width="1" height="1" fill="#d4d4d4"/><rect x="55" y="76.5" width="19" height="1" fill="#9cdcfe"/><rect x="75" y="76.5" width="4" height="1" fill="#9cdcfe"/><rect x="79" y="76.5" width="1" height="1" fill="#d4d4d4"/><rect x="80" y="76.5" width="9" height="1" fill="#ce9178"/><rect x="24" y="78.5" width="2" height="1" fill="#808080"/><rect x="26" y="78.5" width="12" height="1" fill="#569cd6"/><rect x="38" y="78.5" width="1" height="1" fill="#808080"/><rect x="24" y="80.5" width="1" height="1" fill="#808080"/><rect x="25" y="80.5" width="12" height="1" fill="#569cd6"/><rect x="38" y="80.5" width="5" height="1" fill="#9cdcfe"/><rect x="43" y="80.5" width="1" height="1" fill="#d4d4d4"/><rect x="44" y="80.5" width="10" height="1" fill="#ce9178"/><rect x="55" y="80.5" width="4" height="1" fill="#9cdcfe"/><rect x="59" y="80.5" width="1" height="1" fill="#d4d4d4"/><rect x="60" y="80.5" width="12" height="1" fill="#ce9178"/><rect x="72" y="80.5" width="1" height="1" fill="#808080"/><rect x="28" y="82.5" width="1" height="1" fill="#808080"/><rect x="29" y="82.5" width="8" height="1" fill="#569cd6"/><rect x="38" y="82.5" width="8" height="1" fill="#9cdcfe"/><rect x="47" y="82.5" width="7" height="1" fill="#9cdcfe"/><rect x="54" y="82.5" width="1" height="1" fill="#d4d4d4"/><rect x="55" y="82.5" width="21" height="1" fill="#9cdcfe"/><rect x="77" y="82.5" width="4" height="1" fill="#9cdcfe"/><rect x="81" y="82.5" width="1" height="1" fill="#d4d4d4"/><rect x="82" y="82.5" width="7" height="1" fill="#ce9178"/><rect x="24" y="84.5" width="2" height="1" fill="#808080"/><rect x="26" y="84.5" width="12" height="1" fill="#569cd6"/><rect x="38" y="84.5" width="1" height="1" fill="#808080"/><rect x="24" y="86.5" width="1" height="1" fill="#808080"/><rect x="25" y="86.5" width="12" height="1" fill="#569cd6"/><rect x="38" y="86.5" width="5" height="1" fill="#9cdcfe"/><rect x="43" y="86.5" width="1" height="1" fill="#d4d4d4"/><rect x="44" y="86.5" width="8" height="1" fill="#ce9178"/><rect x="53" y="86.5" width="4" height="1" fill="#9cdcfe"/><rect x="57" y="86.5" width="1" height="1" fill="#d4d4d4"/><rect x="58" y="86.5" width="9" height="1" fill="#ce9178"/><rect x="67" y="86.5" width="1" height="1" fill="#808080"/><rect x="28" y="88.5" width="1" height="1" fill="#808080"/><rect x="29" y="88.5" width="8" height="1" fill="#569cd6"/><rect x="38" y="88.5" width="8" height="1" fill="#9cdcfe"/><rect x="47" y="88.5" width="7" height="1" fill="#9cdcfe"/><rect x="54" y="88.5" width="1" height="1" fill="#d4d4d4"/><rect x="55" y="88.5" width="18" height="1" fill="#9cdcfe"/><rect x="74" y="88.5" width="4" height="1" fill="#9cdcfe"/><rect x="78" y="88.5" width="1" height="1" fill="#d4d4d4"/><rect x="79" y="88.5" width="10" height="1" fill="#ce9178"/><rect x="24" y="90.5" width="2" height="1" fill="#808080"/><rect x="26" y="90.5" width="12" height="1" fill="#569cd6"/><rect x="38" y="90.5" width="1" height="1" fill="#808080"/><rect x="24" y="92.5" width="1" height="1" fill="#808080"/><rect x="25" y="92.5" width="12" height="1" fill="#569cd6"/><rect x="38" y="92.5" width="5" height="1" fill="#9cdcfe"/><rect x="43" y="92.5" width="1" height="1" fill="#d4d4d4"/><rect x="44" y="92.5" width="10" height="1" fill="#ce9178"/><rect x="55" y="92.5" width="4" height="1" fill="#9cdcfe"/><rect x="59" y="92.5" width="1" height="1" fill="#d4d4d4"/><rect x="60" y="92.5" width="16" height="1" fill="#ce9178"/><rect x="76" y="92.5" width="1" height="1" fill="#808080"/><rect x="28" y="94.5" width="1" height="1" fill="#808080"/><rect x="29" y="94.5" width="8" height="1" fill="#569cd6"/><rect x="38" y="94.5" width="8" height="1" fill="#9cdcfe"/><rect x="47" y="94.5" width="7" height="1" fill="#9cdcfe"/><rect x="54" y="94.5" width="2" height="1" fill="#d4d4d4"/><rect x="56" y="94.5" width="19" height="1" fill="#9cdcfe"/><rect x="75" y="94.5" width="1" height="1" fill="#d4d4d4"/><rect x="77" y="94.5" width="4" height="1" fill="#9cdcfe"/><rect x="81" y="94.5" width="1" height="1" fill="#d4d4d4"/><rect x="82" y="94.5" width="7" height="1" fill="#ce9178"/><rect x="24" y="96.5" width="2" height="1" fill="#808080"/><rect x="26" y="96.5" width="12" height="1" fill="#569cd6"/><rect x="38" y="96.5" width="1" height="1" fill="#808080"/><rect x="24" y="98.5" width="1" height="1" fill="#808080"/><rect x="25" y="98.5" width="12" height="1" fill="#569cd6"/><rect x="38" y="98.5" width="5" height="1" fill="#9cdcfe"/><rect x="43" y="98.5" width="1" height="1" fill="#d4d4d4"/><rect x="44" y="98.5" width="13" height="1" fill="#ce9178"/><rect x="58" y="98.5" width="4" height="1" fill="#9cdcfe"/><rect x="62" y="98.5" width="1" height="1" fill="#d4d4d4"/><rect x="63" y="98.5" width="13" height="1" fill="#ce9178"/><rect x="76" y="98.5" width="1" height="1" fill="#808080"/><rect x="28" y="100.5" width="1" height="1" fill="#808080"/><rect x="29" y="100.5" width="8" height="1" fill="#569cd6"/><rect x="38" y="100.5" width="8" height="1" fill="#9cdcfe"/><rect x="47" y="100.5" width="7" height="1" fill="#9cdcfe"/><rect x="54" y="100.5" width="2" height="1" fill="#d4d4d4"/><rect x="56" y="100.5" width="16" height="1" fill="#9cdcfe"/><rect x="72" y="100.5" width="1" height="1" fill="#d4d4d4"/><rect x="73" y="100.5" width="1" height="1" fill="#808080"/><rect x="75" y="100.5" width="2" height="1" fill="#808080"/><rect x="77" y="100.5" width="8" height="1" fill="#569cd6"/><rect x="85" y="100.5" width="1" height="1" fill="#808080"/><rect x="24" y="102.5" width="2" height="1" fill="#808080"/><rect x="26" y="102.5" width="12" height="1" fill="#569cd6"/><rect x="38" y="102.5" width="1" height="1" fill="#808080"/><rect x="24" y="104.5" width="1" height="1" fill="#808080"/><rect x="25" y="104.5" width="12" height="1" fill="#569cd6"/><rect x="38" y="104.5" width="5" height="1" fill="#9cdcfe"/><rect x="43" y="104.5" width="1" height="1" fill="#d4d4d4"/><rect x="44" y="104.5" width="11" height="1" fill="#ce9178"/><rect x="56" y="104.5" width="4" height="1" fill="#9cdcfe"/><rect x="60" y="104.5" width="1" height="1" fill="#d4d4d4"/><rect x="61" y="104.5" width="12" height="1" fill="#ce9178"/><rect x="73" y="104.5" width="1" height="1" fill="#808080"/><rect x="28" y="106.5" width="1" height="1" fill="#808080"/><rect x="29" y="106.5" width="8" height="1" fill="#569cd6"/><rect x="38" y="106.5" width="8" height="1" fill="#9cdcfe"/><rect x="47" y="106.5" width="7" height="1" fill="#9cdcfe"/><rect x="54" y="106.5" width="2" height="1" fill="#d4d4d4"/><rect x="56" y="106.5" width="15" height="1" fill="#9cdcfe"/><rect x="71" y="106.5" width="1" height="1" fill="#d4d4d4"/><rect x="73" y="106.5" width="4" height="1" fill="#9cdcfe"/><rect x="77" y="106.5" width="1" height="1" fill="#d4d4d4"/><rect x="78" y="106.5" width="10" height="1" fill="#ce9178"/><rect x="24" y="108.5" width="2" height="1" fill="#808080"/><rect x="26" y="108.5" width="12" height="1" fill="#569cd6"/><rect x="38" y="108.5" width="1" height="1" fill="#808080"/><rect x="20" y="110.5" width="2" height="1" fill="#808080"/><rect x="22" y="110.5" width="7" height="1" fill="#569cd6"/><rect x="29" y="110.5" width="1" height="1" fill="#808080"/><rect x="16" y="112.5" width="2" height="1" fill="#808080"/><rect x="18" y="112.5" width="3" height="1" fill="#569cd6"/><rect x="21" y="112.5" width="1" height="1" fill="#808080"/><rect x="12" y="114.5" width="2" height="1" fill="#808080"/><rect x="14" y="114.5" width="8" height="1" fill="#569cd6"/><rect x="22" y="114.5" width="1" height="1" fill="#808080"/><rect x="8" y="116.5" width="2" height="1" fill="#808080"/><rect x="10" y="116.5" width="9" height="1" fill="#569cd6"/><rect x="19" y="116.5" width="1" height="1" fill="#808080"/><rect x="4" y="118.5" width="2" height="1" fill="#808080"/><rect x="6" y="118.5" width="3" height="1" fill="#569cd6"/><rect x="9" y="118.5" width="1" height="1" fill="#808080"/><rect x="0" y="120.5" width="2" height="1" fill="#808080"/><rect x="2" y="120.5" width="8" height="1" fill="#569cd6"/><rect x="10" y="120.5" width="1" height="1" fill="#808080"/><rect x="0" y="122.5" width="1" height="1" fill="#808080"/><rect x="1" y="122.5" width="6" height="1" fill="#569cd6"/><rect x="8" y="122.5" width="4" height="1" fill="#9cdcfe"/><rect x="12" y="122.5" width="1" height="1" fill="#d4d4d4"/><rect x="13" y="122.5" width="4" height="1" fill="#ce9178"/><rect x="17" y="122.5" width="1" height="1" fill="#808080"/><rect x="4" y="124.5" width="5" height="1" fill="#569cd6"/><rect x="10" y="124.5" width="4" height="1" fill="#4fc1ff"/><rect x="15" y="124.5" width="1" height="1" fill="#d4d4d4"/><rect x="17" y="124.5" width="3" height="1" fill="#dcdcaa"/><rect x="20" y="124.5" width="1" height="1" fill="#ffd700"/><rect x="21" y="124.5" width="2" height="1" fill="#da70d6"/><rect x="23" y="124.5" width="1" height="1" fill="#ffd700"/><rect x="4" y="126.5" width="5" height="1" fill="#569cd6"/><rect x="10" y="126.5" width="13" height="1" fill="#4fc1ff"/><rect x="24" y="126.5" width="1" height="1" fill="#d4d4d4"/><rect x="26" y="126.5" width="3" height="1" fill="#569cd6"/><rect x="30" y="126.5" width="3" height="1" fill="#dcdcaa"/><rect x="33" y="126.5" width="1" height="1" fill="#ffd700"/><rect x="34" y="126.5" width="1" height="1" fill="#da70d6"/><rect x="8" y="128.5" width="1" height="1" fill="#179fff"/><rect x="9" y="128.5" width="4" height="1" fill="#ce9178"/><rect x="13" y="128.5" width="1" height="1" fill="#d4d4d4"/><rect x="15" y="128.5" width="8" height="1" fill="#ce9178"/><rect x="23" y="128.5" width="1" height="1" fill="#179fff"/><rect x="24" y="128.5" width="1" height="1" fill="#d4d4d4"/><rect x="8" y="130.5" width="1" height="1" fill="#179fff"/><rect x="9" y="130.5" width="4" height="1" fill="#ce9178"/><rect x="13" y="130.5" width="1" height="1" fill="#d4d4d4"/><rect x="15" y="130.5" width="8" height="1" fill="#ce9178"/><rect x="23" y="130.5" width="1" height="1" fill="#179fff"/><rect x="24" y="130.5" width="1" height="1" fill="#d4d4d4"/><rect x="8" y="132.5" width="1" height="1" fill="#179fff"/><rect x="9" y="132.5" width="4" height="1" fill="#ce9178"/><rect x="13" y="132.5" width="1" height="1" fill="#d4d4d4"/><rect x="15" y="132.5" width="8" height="1" fill="#ce9178"/><rect x="23" y="132.5" width="1" height="1" fill="#179fff"/><rect x="24" y="132.5" width="1" height="1" fill="#d4d4d4"/><rect x="8" y="134.5" width="1" height="1" fill="#179fff"/><rect x="9" y="134.5" width="4" height="1" fill="#ce9178"/><rect x="13" y="134.5" width="1" height="1" fill="#d4d4d4"/><rect x="15" y="134.5" width="8" height="1" fill="#ce9178"/><rect x="23" y="134.5" width="1" height="1" fill="#179fff"/><rect x="24" y="134.5" width="1" height="1" fill="#d4d4d4"/><rect x="8" y="136.5" width="1" height="1" fill="#179fff"/><rect x="9" y="136.5" width="4" height="1" fill="#ce9178"/><rect x="13" y="136.5" width="1" height="1" fill="#d4d4d4"/><rect x="15" y="136.5" width="8" height="1" fill="#ce9178"/><rect x="23" y="136.5" width="1" height="1" fill="#179fff"/><rect x="24" y="136.5" width="1" height="1" fill="#d4d4d4"/><rect x="8" y="138.5" width="1" height="1" fill="#179fff"/><rect x="9" y="138.5" width="4" height="1" fill="#ce9178"/><rect x="13" y="138.5" width="1" height="1" fill="#d4d4d4"/><rect x="15" y="138.5" width="8" height="1" fill="#ce9178"/><rect x="23" y="138.5" width="1" height="1" fill="#179fff"/><rect x="24" y="138.5" width="1" height="1" fill="#d4d4d4"/><rect x="8" y="140.5" width="1" height="1" fill="#179fff"/><rect x="9" y="140.5" width="4" height="1" fill="#ce9178"/><rect x="13" y="140.5" width="1" height="1" fill="#d4d4d4"/><rect x="15" y="140.5" width="8" height="1" fill="#ce9178"/><rect x="23" y="140.5" width="1" height="1" fill="#179fff"/><rect x="4" y="142.5" width="1" height="1" fill="#da70d6"/><rect x="5" y="142.5" width="1" height="1" fill="#ffd700"/><rect x="4" y="144.5" width="5" height="1" fill="#569cd6"/><rect x="10" y="144.5" width="13" height="1" fill="#4fc1ff"/><rect x="24" y="144.5" width="1" height="1" fill="#d4d4d4"/><rect x="26" y="144.5" width="3" height="1" fill="#569cd6"/><rect x="30" y="144.5" width="3" height="1" fill="#dcdcaa"/><rect x="33" y="144.5" width="1" height="1" fill="#ffd700"/><rect x="34" y="144.5" width="1" height="1" fill="#da70d6"/><rect x="8" y="146.5" width="1" height="1" fill="#179fff"/><rect x="9" y="146.5" width="4" height="1" fill="#ce9178"/><rect x="13" y="146.5" width="1" height="1" fill="#d4d4d4"/><rect x="15" y="146.5" width="8" height="1" fill="#ce9178"/><rect x="23" y="146.5" width="1" height="1" fill="#179fff"/><rect x="24" y="146.5" width="1" height="1" fill="#d4d4d4"/><rect x="8" y="148.5" width="1" height="1" fill="#179fff"/><rect x="9" y="148.5" width="4" height="1" fill="#ce9178"/><rect x="13" y="148.5" width="1" height="1" fill="#d4d4d4"/><rect x="15" y="148.5" width="8" height="1" fill="#ce9178"/><rect x="23" y="148.5" width="1" height="1" fill="#179fff"/><rect x="24" y="148.5" width="1" height="1" fill="#d4d4d4"/><rect x="8" y="150.5" width="1" height="1" fill="#179fff"/><rect x="9" y="150.5" width="4" height="1" fill="#ce9178"/><rect x="13" y="150.5" width="1" height="1" fill="#d4d4d4"/><rect x="15" y="150.5" width="8" height="1" fill="#ce9178"/><rect x="23" y="150.5" width="1" height="1" fill="#179fff"/><rect x="24" y="150.5" width="1" height="1" fill="#d4d4d4"/><rect x="8" y="152.5" width="1" height="1" fill="#179fff"/><rect x="9" y="152.5" width="4" height="1" fill="#ce9178"/><rect x="13" y="152.5" width="1" height="1" fill="#d4d4d4"/><rect x="15" y="152.5" width="10" height="1" fill="#ce9178"/><rect x="25" y="152.5" width="1" height="1" fill="#179fff"/><rect x="26" y="152.5" width="1" height="1" fill="#d4d4d4"/><rect x="8" y="154.5" width="1" height="1" fill="#179fff"/><rect x="9" y="154.5" width="4" height="1" fill="#ce9178"/><rect x="13" y="154.5" width="1" height="1" fill="#d4d4d4"/><rect x="15" y="154.5" width="12" height="1" fill="#ce9178"/><rect x="27" y="154.5" width="1" height="1" fill="#179fff"/><rect x="28" y="154.5" width="1" height="1" fill="#d4d4d4"/><rect x="8" y="156.5" width="1" height="1" fill="#179fff"/><rect x="9" y="156.5" width="4" height="1" fill="#ce9178"/><rect x="13" y="156.5" width="1" height="1" fill="#d4d4d4"/><rect x="15" y="156.5" width="8" height="1" fill="#ce9178"/><rect x="23" y="156.5" width="1" height="1" fill="#179fff"/><rect x="24" y="156.5" width="1" height="1" fill="#d4d4d4"/><rect x="8" y="158.5" width="1" height="1" fill="#179fff"/><rect x="9" y="158.5" width="4" height="1" fill="#ce9178"/><rect x="13" y="158.5" width="1" height="1" fill="#d4d4d4"/><rect x="15" y="158.5" width="8" height="1" fill="#ce9178"/><rect x="23" y="158.5" width="1" height="1" fill="#179fff"/><rect x="24" y="158.5" width="1" height="1" fill="#d4d4d4"/><rect x="8" y="160.5" width="1" height="1" fill="#179fff"/><rect x="9" y="160.5" width="4" height="1" fill="#ce9178"/><rect x="13" y="160.5" width="1" height="1" fill="#d4d4d4"/><rect x="15" y="160.5" width="8" height="1" fill="#ce9178"/><rect x="23" y="160.5" width="1" height="1" fill="#179fff"/><rect x="24" y="160.5" width="1" height="1" fill="#d4d4d4"/><rect x="8" y="162.5" width="6" height="1" fill="#6c6c6c"/><rect x="15" y="162.5" width="9" height="1" fill="#6c6c6c"/><rect x="4" y="164.5" width="1" height="1" fill="#da70d6"/><rect x="5" y="164.5" width="1" height="1" fill="#ffd700"/><rect x="0" y="166.5" width="2" height="1" fill="#808080"/><rect x="2" y="166.5" width="6" height="1" fill="#569cd6"/><rect x="8" y="166.5" width="1" height="1" fill="#808080"/><rect x="0" y="168.5" width="1" height="1" fill="#808080"/><rect x="1" y="168.5" width="5" height="1" fill="#569cd6"/><rect x="7" y="168.5" width="6" height="1" fill="#9cdcfe"/><rect x="14" y="168.5" width="4" height="1" fill="#9cdcfe"/><rect x="18" y="168.5" width="1" height="1" fill="#d4d4d4"/><rect x="19" y="168.5" width="6" height="1" fill="#ce9178"/><rect x="25" y="168.5" width="1" height="1" fill="#808080"/><rect x="4" y="170.5" width="5" height="1" fill="#d7ba7d"/><rect x="9" y="170.5" width="1" height="1" fill="#ffd700"/><rect x="10" y="170.5" width="10" height="1" fill="#d7ba7d"/><rect x="20" y="170.5" width="1" height="1" fill="#ffd700"/><rect x="22" y="170.5" width="1" height="1" fill="#ffd700"/><rect x="8" y="172.5" width="18" height="1" fill="#d7ba7d"/><rect x="27" y="172.5" width="1" height="1" fill="#da70d6"/><rect x="12" y="174.5" width="13" height="1" fill="#9cdcfe"/><rect x="25" y="174.5" width="1" height="1" fill="#d4d4d4"/><rect x="27" y="174.5" width="1" height="1" fill="#b5cea8"/><rect x="29" y="174.5" width="10" height="1" fill="#569cd6"/><rect x="39" y="174.5" width="1" height="1" fill="#d4d4d4"/><rect x="12" y="176.5" width="7" height="1" fill="#9cdcfe"/><rect x="19" y="176.5" width="1" height="1" fill="#d4d4d4"/><rect x="21" y="176.5" width="4" height="1" fill="#b5cea8"/><rect x="26" y="176.5" width="4" height="1" fill="#b5cea8"/><rect x="30" y="176.5" width="1" height="1" fill="#d4d4d4"/><rect x="12" y="178.5" width="13" height="1" fill="#9cdcfe"/><rect x="25" y="178.5" width="1" height="1" fill="#d4d4d4"/><rect x="27" y="178.5" width="3" height="1" fill="#b5cea8"/><rect x="31" y="178.5" width="5" height="1" fill="#d4d4d4"/><rect x="37" y="178.5" width="7" height="1" fill="#ce9178"/><rect x="44" y="178.5" width="1" height="1" fill="#d4d4d4"/><rect x="12" y="180.5" width="5" height="1" fill="#9cdcfe"/><rect x="17" y="180.5" width="1" height="1" fill="#d4d4d4"/><rect x="19" y="180.5" width="7" height="1" fill="#ce9178"/><rect x="26" y="180.5" width="1" height="1" fill="#d4d4d4"/><rect x="8" y="182.5" width="1" height="1" fill="#da70d6"/><rect x="8" y="186.5" width="16" height="1" fill="#d7ba7d"/><rect x="25" y="186.5" width="1" height="1" fill="#da70d6"/><rect x="12" y="188.5" width="7" height="1" fill="#9cdcfe"/><rect x="19" y="188.5" width="1" height="1" fill="#d4d4d4"/><rect x="21" y="188.5" width="4" height="1" fill="#b5cea8"/><rect x="25" y="188.5" width="1" height="1" fill="#d4d4d4"/><rect x="12" y="190.5" width="8" height="1" fill="#d7ba7d"/><rect x="21" y="190.5" width="1" height="1" fill="#179fff"/><rect x="16" y="192.5" width="5" height="1" fill="#9cdcfe"/><rect x="21" y="192.5" width="1" height="1" fill="#d4d4d4"/><rect x="23" y="192.5" width="4" height="1" fill="#b5cea8"/><rect x="27" y="192.5" width="1" height="1" fill="#d4d4d4"/><rect x="12" y="194.5" width="1" height="1" fill="#179fff"/><rect x="8" y="196.5" width="1" height="1" fill="#da70d6"/><rect x="4" y="198.5" width="1" height="1" fill="#ffd700"/><rect x="0" y="200.5" width="2" height="1" fill="#808080"/><rect x="2" y="200.5" width="5" height="1" fill="#569cd6"/><rect x="7" y="200.5" width="1" height="1" fill="#808080"/></g></svg><i style="position:absolute;left:1px;top:142px;width:2px;height:22px;background:#2ea043"></i></div>
<div id="vscroll"><i class="sl"></i><i style="left:10px;top:195px;width:4px;height:6px;background:#c8a41c"></i><i style="left:10px;top:232px;width:4px;height:6px;background:#c8a41c"></i><i style="left:10px;top:243px;width:4px;height:6px;background:#c8a41c"></i><i style="left:10px;top:261.5px;width:4px;height:6px;background:#c8a41c"></i><i style="left:10px;top:279.5px;width:4px;height:6px;background:#c8a41c"></i><i style="left:10px;top:297px;width:4px;height:6px;background:#c8a41c"></i><i style="left:10px;top:315.5px;width:4px;height:6px;background:#c8a41c"></i><i style="left:10px;top:333.5px;width:4px;height:6px;background:#c8a41c"></i><i style="left:5px;top:159px;width:5px;height:6px;background:#7a5c1c"></i><i style="left:10px;top:159px;width:4px;height:6px;background:#e02020"></i><i style="left:5px;top:393px;width:5px;height:6px;background:#6b6431"></i><i style="left:5px;top:447px;width:4px;height:6px;background:#6b6431"></i><i style="left:9px;top:447px;width:5px;height:6px;background:#b5343c"></i><i style="left:1px;top:441px;width:3px;height:65px;background:#3f7a4a"></i><i style="left:0;top:500px;width:14px;height:2px;background:#8f9a9a"></i></div>

<div id="sticky">
<div class="row" style="top:1.5px"><span class="ln">29</span><span class="code" style="left:69.5px"><span class="g">&lt;</span><span class="t">template</span><span class="g">&gt;</span></span></div>
<div class="row" style="top:20.5px"><span class="ln">30</span><span class="code" style="left:100.3px"><span class="g">&lt;</span><span class="t">div</span><span class="g">&gt;</span></span></div>
<div class="row" style="top:39.5px"><span class="ln">31</span><span class="code" style="left:131.1px"><span class="g">&lt;</span><span class="t">el-drawer</span><span class="w"> </span><span class="a">:size</span><span class="w">="</span><span class="nu dot">438</span><span class="w">" </span><span class="w">@</span><span class="a">open</span><span class="w">="</span><span class="a">opened</span><span class="w">" </span><span class="a">:model-value</span><span class="w">="</span><span class="a">props.open</span><span class="w">" </span><span class="w">@</span><span class="a">close</span><span class="w">="</span><span class="a">handleBef</span></span></div>
<div class="row" style="top:58.5px"><span class="ln">35</span><span class="code" style="left:161.9px"><span class="g">&lt;</span><span class="t">template</span><span class="w"> #</span><span class="a2">default</span><span class="g">&gt;</span></span></div>
<div class="row" style="top:77.5px"><span class="ln">36</span><span class="code" style="left:192.7px"><span class="g">&lt;</span><span class="t">div</span><span class="g">&gt;</span></span></div>

</div>
<div id="tabs"><div id="tab">
<svg style="position:absolute;left:14px;top:10.5px" width="14" height="13" viewBox="0 0 14 13"><path d="M0 0h3L7 7.2 11 0h3L7 12.6z" fill="#8dc149"/><path d="M4.3 0h2L7 1.4 7.7 0h2L7 5z" fill="#8dc149"/></svg>
<span class="nm">infoDrawer.vue <span style="font-size:12.5px;margin-left:2px">9+, M</span></span>
<svg class="x" width="10" height="10" viewBox="0 0 10 10"><path d="M1 1l8 8M9 1l-8 8" stroke="#fff" stroke-width="1.5" fill="none"/></svg>
</div>
<div id="tools">
<svg style="left:625px;top:10px" width="16" height="16" viewBox="0 0 16 16" fill="none" stroke="#d0d0d0" stroke-width="1.2"><path d="M3.5 2.2v11.6L13 8z" stroke-linejoin="round"/></svg>
<svg style="left:651px;top:10px" width="16" height="16" viewBox="0 0 16 16" fill="none" stroke="#d0d0d0" stroke-width="1.2"><path d="M2.3 4.9A6.6 6.6 0 1 1 1.4 8.2"/><path d="M1.8 1.2v3.9h3.9"/><path d="M8 4.4V8.2l2.6 1.8"/></svg>
<svg style="left:677px;top:10px" width="16" height="16" viewBox="0 0 16 16" fill="none" stroke="#d0d0d0" stroke-width="1.2"><circle cx="3.2" cy="3.2" r="1.7"/><circle cx="12.8" cy="12.8" r="1.7"/><path d="M3.2 5v5.2a2 2 0 0 0 2 2h3.2M6.6 10.4l1.9 1.9-1.9 1.9"/><path d="M12.8 11V5.6a2 2 0 0 0-2-2H7.6M9.4 1.8L7.5 3.7l1.9 1.9"/></svg>
<svg style="left:702px;top:10px" width="18" height="16" viewBox="0 0 18 16" fill="none" stroke="#d0d0d0" stroke-width="1.2"><circle cx="10.5" cy="6.8" r="4.2"/><path d="M6.3 6.8H1M3.4 4.2L.9 6.8l2.5 2.6M14.7 6.8h2.6"/><circle cx="7" cy="14.2" r="1" fill="#d0d0d0" stroke="none"/><circle cx="10.5" cy="14.2" r="1" fill="#d0d0d0" stroke="none"/><circle cx="14" cy="14.2" r="1" fill="#d0d0d0" stroke="none"/></svg>
<svg style="left:729px;top:10px" width="17" height="16" viewBox="0 0 17 16" fill="none" stroke="#6f6f6f" stroke-width="1.2"><circle cx="8.5" cy="7.5" r="4"/><path d="M0 7.5h4.5M12.5 7.5H17"/></svg>
<svg style="left:754px;top:10px" width="18" height="16" viewBox="0 0 18 16" fill="none" stroke="#6f6f6f" stroke-width="1.2"><circle cx="6.5" cy="7.5" r="4"/><path d="M10.5 7.5H17M14.4 4.9L17 7.5l-2.6 2.6"/></svg>
<svg style="left:780px;top:9px" width="18" height="18" viewBox="0 0 18 18" fill="none" stroke="#d8d8d8" stroke-width="1.4"><circle cx="9" cy="9" r="7.8"/><path d="M7.3 13V5M7.3 12c0-3 4-2 4.2-4.6" stroke-width="1.5"/><circle cx="7.3" cy="4.6" r="1.2" fill="#d8d8d8"/><circle cx="7.3" cy="13.2" r="1.2" fill="#d8d8d8"/><circle cx="11.6" cy="7.4" r="1.2" fill="#d8d8d8"/></svg>
<svg style="left:808px;top:10.5px" width="15" height="15" viewBox="0 0 15 15" fill="none" stroke="#d0d0d0" stroke-width="1.2"><rect x=".8" y="1" width="13.4" height="12.4" rx="1.2"/><path d="M.8 7.2h13.4"/></svg>
<svg style="left:834px;top:10px" width="14" height="16" viewBox="0 0 14 16"><circle cx="2" cy="8" r="1.1" fill="#d0d0d0"/><circle cx="7" cy="8" r="1.1" fill="#d0d0d0"/><circle cx="12" cy="8" r="1.1" fill="#d0d0d0"/></svg>
</div>
</div>
<div id="crumbs"><span style="left:16.7px">apps</span><span style="left:60.4px">smartlab</span><span style="left:125.8px">smartlab-ui</span><span style="left:207.5px">src</span><span style="left:239.5px">pages</span><span style="left:289.5px">laboratory</span><span style="left:364.6px">scheduled-record</span><svg style="left:50px;top:7px" width="7" height="10" viewBox="0 0 7 10"><path d="M1 .8L5.6 5 1 9.2" stroke="#a0a0a0" stroke-width="1.1" fill="none"/></svg><svg style="left:115.5px;top:7px" width="7" height="10" viewBox="0 0 7 10"><path d="M1 .8L5.6 5 1 9.2" stroke="#a0a0a0" stroke-width="1.1" fill="none"/></svg><svg style="left:196.5px;top:7px" width="7" height="10" viewBox="0 0 7 10"><path d="M1 .8L5.6 5 1 9.2" stroke="#a0a0a0" stroke-width="1.1" fill="none"/></svg><svg style="left:228.5px;top:7px" width="7" height="10" viewBox="0 0 7 10"><path d="M1 .8L5.6 5 1 9.2" stroke="#a0a0a0" stroke-width="1.1" fill="none"/></svg><svg style="left:279px;top:7px" width="7" height="10" viewBox="0 0 7 10"><path d="M1 .8L5.6 5 1 9.2" stroke="#a0a0a0" stroke-width="1.1" fill="none"/></svg><svg style="left:354px;top:7px" width="7" height="10" viewBox="0 0 7 10"><path d="M1 .8L5.6 5 1 9.2" stroke="#a0a0a0" stroke-width="1.1" fill="none"/></svg><svg style="left:471px;top:7px" width="7" height="10" viewBox="0 0 7 10"><path d="M1 .8L5.6 5 1 9.2" stroke="#a0a0a0" stroke-width="1.1" fill="none"/></svg><svg style="left:487px;top:6px" width="12" height="11" viewBox="0 0 14 13"><path d="M0 0h3L7 7.2 11 0h3L7 12.6z" fill="#8dc149"/><path d="M4.3 0h2L7 1.4 7.7 0h2L7 5z" fill="#8dc149"/></svg><span style="left:503px">infoDrawer.vue</span></div>
</div>
<div id="wps"><div class="lsh"></div>
<div id="wmenu">
<i style="position:absolute;left:164px;top:0;width:302px;height:2px;background:#f4f5f9;border-radius:0 0 3px 3px"></i>
<svg style="left:2px;top:12px" width="12" height="16" viewBox="0 0 12 16" fill="none" stroke="#2b2b2b" stroke-width="1.2" ><path d="M3 13.5a2 2 0 1 1 2-2V2.2h2.5a3.6 3.6 0 0 1 0 7.2H3.5"/></svg>
<svg style="left:27px;top:12.5px" width="15" height="15" viewBox="0 0 15 15" fill="none" stroke="#2b2b2b" stroke-width="1.2" ><path d="M3.5 5V1.2h8V5M3.5 11H1.6a.9.9 0 0 1-.9-.9V5.9a.9.9 0 0 1 .9-.9h11.8a.9.9 0 0 1 .9.9v4.2a.9.9 0 0 1-.9.9h-1.9"/><rect x="3.5" y="8.6" width="8" height="5.4" rx=".6"/></svg>
<svg style="left:53px;top:12.5px" width="16" height="16" viewBox="0 0 16 16" fill="none" stroke="#2b2b2b" stroke-width="1.2" ><path d="M3.5 5V1.2h8V5M3 11H1.6a.9.9 0 0 1-.9-.9V5.9a.9.9 0 0 1 .9-.9h11.8a.9.9 0 0 1 .9.9V7"/><path d="M3.5 13V8.6h3"/><circle cx="10.3" cy="10.6" r="3.1"/><path d="M12.6 12.9l2.4 2.4"/></svg>
<svg style="left:83px;top:13px" width="12" height="14" viewBox="0 0 12 14" fill="none" stroke="#b3b3b6" stroke-width="1.2"><path d="M1.2 1.5v4h4M1.4 5.2C3 2.4 6.4 1.6 8.6 3.3c2.3 1.8 2.2 5-.1 7.2L6 12.8"/></svg>
<svg style="left:101.5px;top:18.5px" width="7" height="5" viewBox="0 0 7 5" fill="none" stroke="#b3b3b6" stroke-width="1.3"><path d="M.8 1l2.7 2.6L6.2 1"/></svg>
<svg style="left:123px;top:13px" width="12" height="14" viewBox="0 0 12 14" fill="none" stroke="#b3b3b6" stroke-width="1.2"><path d="M10.8 1.5v4h-4M10.6 5.2C9 2.4 5.6 1.6 3.4 3.3c-2.3 1.8-2.2 5 .1 7.2L6 12.8" transform="translate(0,0)"/></svg>
<svg style="left:149.5px;top:17px" width="11" height="7" viewBox="0 0 11 7" fill="none" stroke="#2b2b2b" stroke-width="1.4"><path d="M1 1l4.5 4.4L10 1"/></svg>
<i class="vsep" style="left:175px;top:12px;height:16px"></i>
<span class="mi act" style="left:186.2px">开始</span>
<span class="mi" style="left:223.7px">插入</span>
<span class="mi" style="left:261.6px">页面</span>
<span class="mi" style="left:299.9px">引用</span>
<span class="mi" style="left:338.3px">审阅</span>
<span class="mi" style="left:376.2px">视图</span>
<span class="mi" style="left:414px">工具</span>
<span class="mi" style="left:452px">会员专享</span>
<i style="position:absolute;left:186.2px;top:31.5px;width:26px;height:2.4px;background:#2b5fc7;border-radius:1px"></i>
<i class="vsep" style="left:516px;top:10px;height:20px"></i>
<svg style="left:526px;top:14px" width="16" height="12" viewBox="0 0 16 12"><defs><linearGradient id="ai1" x1="0" y1="1" x2="1" y2="0"><stop offset="0" stop-color="#2a6df5"/><stop offset="1" stop-color="#7a4cf0"/></linearGradient><linearGradient id="ai2" x1="0" y1="0" x2="1" y2="1"><stop offset="0" stop-color="#a64cf0"/><stop offset="1" stop-color="#ff4f8a"/></linearGradient></defs><path d="M0 11.5L6 .5h4L4 11.5z" fill="url(#ai1)"/><path d="M8.2 5.2L11 4.6l4.6 6.9h-4z" fill="url(#ai2)"/></svg>
<span class="mi" style="left:546px;letter-spacing:-.45px;word-spacing:1.5px">WPS AI</span>
<svg style="left:601px;top:12px" width="17" height="17" viewBox="0 0 17 17" fill="none" stroke="#2b2b2b" stroke-width="1.2" stroke-width="1.3"><circle cx="6.6" cy="6.6" r="5.4"/><path d="M10.6 10.6l5.2 5.2"/></svg>
</div>
<div id="ribbon">
<svg style="left:12.5px;top:54px" width="17" height="16" viewBox="0 0 17 16" fill="none" stroke-width="1.2"><path d="M4.6 .8l6.8 10.4M12.4 .8L5.6 11.2" stroke="#2b2b2b"/><circle cx="3.8" cy="12.6" r="2.6" stroke="#3d4fc4"/><circle cx="13.2" cy="12.6" r="2.6" stroke="#3d4fc4"/></svg>
<svg style="left:12.5px;top:82px" width="17" height="17" viewBox="0 0 17 17" fill="none" stroke-width="1.3"><path d="M5.6 11.4H.8V.8h9v2.4" stroke="#3d4fc4"/><path d="M6.6 5h5.6l3.6 3.6v7.4H6.6z" stroke="#2b2b2b" fill="#fff"/><path d="M12 5v3.8h3.8" stroke="#2b2b2b"/></svg>
<svg style="left:32px;top:104.5px" width="6" height="6" viewBox="0 0 6 6" fill="none" stroke="#6a6a6a" stroke-width="1"><path d="M.6 .6l4.6 4.6M5.4 1.6v3.8H1.6"/></svg>
<i class="vsep" style="left:41.5px;top:44px;height:66px"></i>
<div class="fbox" style="left:50px;top:50px;width:193.6px;height:24px"><i style="position:absolute;left:130.4px;top:0;width:1px;height:22px;background:#c9c9c9"></i>
<span style="position:absolute;left:12px;top:0;line-height:22px;font-size:13px;color:#222;letter-spacing:-.15px">Calibri</span>
<svg style="position:absolute;left:117px;top:8px" width="10" height="6" viewBox="0 0 10 6" fill="none" stroke="#555" stroke-width="1.1"><path d="M.8 .8L5 5 9.2 .8"/></svg>
<span style="position:absolute;left:141px;top:0;line-height:22px;font-size:12.5px;color:#222">五号</span>
<svg style="position:absolute;left:178.5px;top:8px" width="10" height="6" viewBox="0 0 10 6" fill="none" stroke="#555" stroke-width="1.1"><path d="M.8 .8L5 5 9.2 .8"/></svg>
</div>
<span class="gl" style="left:255.5px;top:51px;font-size:17px">A</span><svg style="left:264px;top:54.5px" width="7" height="7" viewBox="0 0 7 7" stroke="#3d5fcf" stroke-width="1.1"><path d="M3.5 .3v6.4M.3 3.5h6.4"/></svg>
<span class="gl" style="left:283.5px;top:51px;font-size:17px">A</span><svg style="left:291.5px;top:55.5px" width="7" height="3" viewBox="0 0 7 3" stroke="#3d5fcf" stroke-width="1.1"><path d="M.3 1h6.4"/></svg>
<span class="gl" style="left:312.5px;top:53px;font-size:15px;font-family:'Noto Sans CJK SC',sans-serif">文</span><span class="gl" style="left:312px;top:47.5px;font-size:7.5px;letter-spacing:0">wén</span>
<svg style="left:333.5px;top:59.5px" width="7" height="5" viewBox="0 0 7 5" fill="none" stroke="#2b2b2b" stroke-width="1.5"><path d="M.8 1l2.7 2.6L6.2 1"/></svg>
<svg style="left:353.5px;top:54px" width="17" height="16" viewBox="0 0 17 16" fill="none" stroke="#2b2b2b" stroke-width="1.2" ><path d="M6.2 11.6L1.4 7.4a.8.8 0 0 1 0-1.2L6.6 1a.9.9 0 0 1 1.2 0l6.2 5.6a.8.8 0 0 1 0 1.2l-4.2 3.8z"/><path d="M4 4.2l6.4 6.8M3.5 14.6h13"/></svg>
<span class="gl" style="left:57px;top:79px;font-size:16.5px;font-weight:400;-webkit-text-stroke:.55px #2b2b2b">B</span>
<svg style="left:84px;top:83.5px" width="12" height="13" viewBox="0 0 12 13" fill="none" stroke="#2b2b2b" stroke-width="1.3"><path d="M4 .8h7M.6 12.2h7M7.8 .8L3.8 12.2"/></svg>
<svg style="left:115px;top:83px" width="11" height="14" viewBox="0 0 11 14" fill="none" stroke="#2b2b2b" stroke-width="1.3"><path d="M1.6 .4v6a3.9 3.9 0 0 0 7.8 0v-6M.4 13.2h10.2"/></svg>
<svg style="left:133px;top:87.5px" width="7" height="5" viewBox="0 0 7 5" fill="none" stroke="#2b2b2b" stroke-width="1.5"><path d="M.8 1l2.7 2.6L6.2 1"/></svg>
<svg style="left:153px;top:83px" width="14" height="14" viewBox="0 0 14 14" fill="none" stroke="#2b2b2b" stroke-width="1.2"><path d="M5.8 5.2L7 1.2l1.2 4M3.2 13.2l1.4-4M10.8 13.2l-1.4-4M.4 7.2h13.2"/></svg>
<svg style="left:173px;top:87.5px" width="7" height="5" viewBox="0 0 7 5" fill="none" stroke="#2b2b2b" stroke-width="1.5"><path d="M.8 1l2.7 2.6L6.2 1"/></svg>
<svg style="left:193.5px;top:82px" width="15" height="15" viewBox="0 0 15 15" fill="none" stroke="#2b2b2b" stroke-width="1.3"><path d="M.8 3.4l8.4 10.8M9.2 3.4L.8 14.2"/></svg><span class="gl" style="left:204px;top:79px;font-size:8px;font-weight:700">2</span>
<svg style="left:213px;top:87.5px" width="7" height="5" viewBox="0 0 7 5" fill="none" stroke="#2b2b2b" stroke-width="1.5"><path d="M.8 1l2.7 2.6L6.2 1"/></svg>
<span class="gl" style="left:234px;top:79px;font-size:19px;color:#fff;-webkit-text-stroke:1px #c2c2c2">A</span>
<svg style="left:253px;top:87.5px" width="7" height="5" viewBox="0 0 7 5" fill="none" stroke="#c2c2c2" stroke-width="1.5"><path d="M.8 1l2.7 2.6L6.2 1"/></svg>
<svg style="left:271.5px;top:81px" width="17" height="18" viewBox="0 0 17 18" fill="none"><path d="M3.4 9.4L10 2.8l1.6 1.8-5.2 5.4zM3.4 9.4l-.8 1.6h3l1-1.2M9.4 1l3 3" stroke="#2b2b2b" stroke-width="1.1"/><rect x=".6" y="12.4" width="15.4" height="4.4" rx="2.2" fill="#ffff00" stroke="#d8d820" stroke-width=".8"/></svg>
<svg style="left:293px;top:87.5px" width="7" height="5" viewBox="0 0 7 5" fill="none" stroke="#2b2b2b" stroke-width="1.5"><path d="M.8 1l2.7 2.6L6.2 1"/></svg>
<span class="gl" style="left:315.2px;top:76px;font-size:14.5px">A</span><i style="position:absolute;left:312px;top:93px;width:16px;height:5px;border-radius:2.5px;background:#0a12e0"></i>
<svg style="left:333px;top:87.5px" width="7" height="5" viewBox="0 0 7 5" fill="none" stroke="#2b2b2b" stroke-width="1.5"><path d="M.8 1l2.7 2.6L6.2 1"/></svg>
<i style="position:absolute;left:354px;top:82px;width:16px;height:16px;background:#d0d0d0"></i><span class="gl" style="left:357.2px;top:79.5px;font-size:14.5px">A</span>
<svg style="left:373.5px;top:104.5px" width="6" height="6" viewBox="0 0 6 6" fill="none" stroke="#6a6a6a" stroke-width="1"><path d="M.6 .6l4.6 4.6M5.4 1.6v3.8H1.6"/></svg>
<i class="vsep" style="left:382.5px;top:44px;height:66px"></i>
<svg style="left:397px;top:55px" width="16" height="14" viewBox="0 0 16 14" fill="none" stroke="#2b2b2b" stroke-width="1.2" ><circle cx="1.6" cy="1.6" r="1.1"/><circle cx="1.6" cy="7" r="1.1"/><circle cx="1.6" cy="12.4" r="1.1"/><path d="M5.4 1.6h10M5.4 7h10M5.4 12.4h10"/></svg>
<svg style="left:418px;top:59.5px" width="7" height="5" viewBox="0 0 7 5" fill="none" stroke="#2b2b2b" stroke-width="1.5"><path d="M.8 1l2.7 2.6L6.2 1"/></svg>
<svg style="left:436.5px;top:54.5px" width="16" height="15" viewBox="0 0 16 15" fill="none" stroke="#2b2b2b" stroke-width="1.2"><path d="M5.4 2h10M5.4 7.4h10M5.4 12.8h10"/><text x="0" y="4.6" font-size="5.4" font-family="Liberation Sans,sans-serif" font-weight="700" fill="#2b2b2b" stroke="none">1</text><text x="0" y="9.8" font-size="5.4" font-family="Liberation Sans,sans-serif" font-weight="700" fill="#2b2b2b" stroke="none">2</text><text x="0" y="15" font-size="5.4" font-family="Liberation Sans,sans-serif" font-weight="700" fill="#2b2b2b" stroke="none">3</text></svg>
<svg style="left:458px;top:59.5px" width="7" height="5" viewBox="0 0 7 5" fill="none" stroke="#2b2b2b" stroke-width="1.5"><path d="M.8 1l2.7 2.6L6.2 1"/></svg>
<svg style="left:479px;top:55px" width="15" height="14" viewBox="0 0 15 14" fill="none" stroke-width="1.2"><path d="M1.4 .8h13M5.6 7h2.4M10 7h4.4M1.4 13.2h13" stroke="#2b2b2b"/><path d="M.6 7h7M3.4 4.2L.6 7l2.8 2.8" stroke="#3d5fcf"/></svg>
<svg style="left:507.5px;top:55px" width="15" height="14" viewBox="0 0 15 14" fill="none" stroke-width="1.2"><path d="M.6 .8h13M9 7h5M.6 13.2h13" stroke="#2b2b2b"/><path d="M.4 7h7M4.6 4.2L7.4 7 4.6 9.8" stroke="#3d5fcf"/></svg>
<svg style="left:536.5px;top:54px" width="17" height="16" viewBox="0 0 17 16" fill="none" stroke-width="1.2"><path d="M3.6 15.4L8.5 4.6l4.9 10.8M5.4 11.6h6.2" stroke="#2b2b2b"/><path d="M.6 2.4h5.2M2.6 .6L.6 2.4l2 1.8M16.4 2.4h-5.2M14.4 .6l2 1.8-2 1.8" stroke="#3d5fcf"/></svg>
<svg style="left:558px;top:59.5px" width="7" height="5" viewBox="0 0 7 5" fill="none" stroke="#2b2b2b" stroke-width="1.5"><path d="M.8 1l2.7 2.6L6.2 1"/></svg>
<svg style="left:579px;top:55px" width="13" height="15" viewBox="0 0 13 15" fill="none" stroke="#2b2b2b" stroke-width="1.2" ><path d="M12.4 3.6H.8M3.8 .8L.8 3.6l3 2.8M9.6 .6v3"/><path d="M.6 11h11.8M9.4 8.2l3 2.8-3 2.8"/></svg>
<svg style="left:598px;top:59.5px" width="7" height="5" viewBox="0 0 7 5" fill="none" stroke="#2b2b2b" stroke-width="1.5"><path d="M.8 1l2.7 2.6L6.2 1"/></svg>
<svg style="left:618px;top:54.5px" width="17" height="15" viewBox="0 0 17 15" fill="none" stroke-width="1.2"><path d="M.8 14.2L3.8 .8h3.4l1 13.4zM2.6 6.2h5M1.8 10h6" stroke="#2b2b2b"/><path d="M13 .8v12.6M9.8 10.2l3.2 3.2 3.2-3.2" stroke="#3d5fcf"/></svg>
<svg style="left:646.5px;top:56px" width="16" height="12" viewBox="0 0 16 12" fill="none" stroke="#2b2b2b" stroke-width="1.2" ><path d="M.6 .6h14.8v2.2M.6 .6v2.2M.6 9.200v2.200h14.800v-2.200M5.500 9.200v2.200M10.500 9.200v2.200M5.500 .6v2.200M10.500 .6v2.200"/><path d="M.6 6h14.800" stroke-dasharray="2 1.6"/></svg>
<svg style="left:395.5px;top:84px" width="14" height="12" viewBox="0 0 14 12" fill="none" stroke="#2b2b2b" stroke-width="1.2" ><path d="M.4 .8h13.2M.4 6h8.4M.4 11.2h13.2"/></svg>
<svg style="left:423.5px;top:84px" width="14" height="12" viewBox="0 0 14 12" fill="none" stroke="#2b2b2b" stroke-width="1.2" ><path d="M.4 .8h13.2M2.8 6h8.400M.4 11.2h13.2"/></svg>
<svg style="left:451.5px;top:84px" width="14" height="12" viewBox="0 0 14 12" fill="none" stroke="#2b2b2b" stroke-width="1.2" ><path d="M.4 .8h13.2M5.2 6h8.400M.4 11.2h13.2"/></svg>
<i style="position:absolute;left:475px;top:78px;width:24px;height:24px;border-radius:4px;background:#e4e4e4"></i>
<svg style="left:480px;top:84px" width="14" height="12" viewBox="0 0 14 12" fill="none" stroke="#2b2b2b" stroke-width="1.2" stroke-width="1.3"><path d="M.4 .8h13.2M.4 6h13.2M.4 11.2h13.2"/></svg>
<svg style="left:506.5px;top:83px" width="17" height="15" viewBox="0 0 17 15" fill="none" stroke-width="1.2"><path d="M.8 1.200v13.200M16.2 1.200v13.200M3.600 8.400h9.800M3.600 12.800h9.800" stroke="#2b2b2b"/><path d="M6.400 .8L4.600 2.600l1.800 1.800M10.600 .8l1.800 1.800-1.800 1.800" stroke="#3d5fcf"/></svg>
<svg style="left:537px;top:82.5px" width="16" height="16" viewBox="0 0 16 16" fill="none" stroke-width="1.2"><path d="M7 2.400h8.400M7 8h6M7 13.600h8.400" stroke="#2b2b2b"/><path d="M2.800 1v14M.6 3.200L2.800 1 5 3.200M.6 12.800L2.800 15 5 12.800" stroke="#3d5fcf"/></svg>
<svg style="left:558px;top:87.5px" width="7" height="5" viewBox="0 0 7 5" fill="none" stroke="#2b2b2b" stroke-width="1.5"><path d="M.8 1l2.7 2.6L6.2 1"/></svg>
<i class="vsep" style="left:579.5px;top:81px;height:18px"></i>
<svg style="left:593px;top:81px" width="17" height="19" viewBox="0 0 17 19" fill="none" stroke-width="1.2"><path d="M6.600 1.400a2 2 0 0 1 3.600 1.400M3.400 5.800l5-4.200 5 5.400-5.400 4.600a1 1 0 0 1-1.400-.1L3.300 7.200a1 1 0 0 1 .1-1.400z" stroke="#2b2b2b"/><path d="M13.800 8.600c.8 1.200 1.200 1.800 1.200 2.400a1.200 1.200 0 0 1-2.400 0c0-.6.400-1.200 1.200-2.400z" fill="#2b2b2b"/><rect x=".8" y="14" width="15.200" height="4.200" rx="2.100" stroke="#b9b9b9" fill="#fff"/><path d="M6 17.600l5-3" stroke="#e0303a" stroke-width="1.100"/></svg>
<svg style="left:614.5px;top:87.5px" width="7" height="5" viewBox="0 0 7 5" fill="none" stroke="#2b2b2b" stroke-width="1.5"><path d="M.8 1l2.7 2.6L6.2 1"/></svg>
<svg style="left:633.5px;top:83.5px" width="14" height="14" viewBox="0 0 14 14" fill="none" stroke-width="1.2"><rect x=".6" y=".6" width="12.800" height="12.800" stroke="#2b2b2b"/><path d="M7 2v10M2 7h10" stroke="#bdbdbd" stroke-dasharray="1 1" stroke-width=".9"/></svg>
<svg style="left:654px;top:87.5px" width="7" height="5" viewBox="0 0 7 5" fill="none" stroke="#2b2b2b" stroke-width="1.5"><path d="M.8 1l2.7 2.6L6.2 1"/></svg>
<svg style="left:666px;top:104.5px" width="6" height="6" viewBox="0 0 6 6" fill="none" stroke="#6a6a6a" stroke-width="1"><path d="M.6 .6l4.6 4.6M5.4 1.6v3.8H1.6"/></svg>
<i class="vsep" style="left:675.5px;top:44px;height:66px"></i>
<i style="position:absolute;left:684px;top:50.5px;width:30px;height:49px;border:1px solid #d9d9d9;border-radius:6px"></i><i style="position:absolute;left:686px;top:52.5px;width:30px;height:45px;border:2.500px solid #cfcfcf;border-radius:5px"></i>
</div>
<div id="doc">
<i class="gap"></i>
<i class="cm" style="left:52px;top:213px;width:33px;height:1px"></i><i class="cm" style="left:84px;top:213px;width:1px;height:33px"></i>
<i class="cm" style="left:52px;top:508px;width:33px;height:1px"></i><i class="cm" style="left:84px;top:476px;width:1px;height:33px"></i>
<svg style="left:34px;top:170px" width="9" height="15" viewBox="0 0 9 15" fill="#8a8a8a" stroke="none"><circle cx="2" cy="2" r="1.3"/><circle cx="7" cy="2" r="1.3"/><circle cx="2" cy="7.500" r="1.3"/><circle cx="7" cy="7.500" r="1.3"/><circle cx="2" cy="13" r="1.3"/><circle cx="7" cy="13" r="1.3"/></svg>
<div class="dl" style="top:104.6px"><span class="st" style="left:134.5px">*</span><span class="cj" style="left:154px">使用者<span class="dash">--</span></span><span class="cj hl" style="left:224px">已接受</span></div>
<div class="dl" style="top:134.4px"><span class="sy" style="left:134.5px">*/</span></div>
<div class="dl" style="top:164.7px"><span class="lc" style="left:123.6px">public static final int </span><span class="uc" style="left:287.6px">BOOK_STATUS_USER_ACCEPT</span><span class="lc eq" style="left:524.6px"> = <span class="sel">30</span>;</span></div>
<div class="dl" style="top:537.4px"><span class="sy" style="left:123.6px">/**</span></div>
<div class="dl" style="top:566.6px"><span class="st" style="left:134.5px">*</span><span class="cj" style="left:154px">使用者<span class="dash">--</span></span><span class="cj hl" style="left:224px">已拒绝</span></div>
<div class="dl" style="top:596px"><span class="sy" style="left:134.5px">*/</span></div>
<div class="dl" style="top:626.4px"><span class="lc" style="left:123.6px">public static final int </span><span class="uc" style="transform:scaleX(.8757);left:287.6px">BOOK_STATUS_USER_UNACCEPT</span><span class="lc eq" style="left:549.6px"> = 31;</span></div>
<div class="dl" style="top:682.8px"><span class="sy" style="left:123.6px">/**</span></div>
<div class="dl" style="top:712.4px"><span class="st" style="left:134.5px">*</span><span class="cj" style="left:154px">预约</span><span class="cj hl" style="left:192.7px">已结束</span></div>
<div class="dl" style="top:741.4px"><span class="sy" style="left:134.5px">*/</span></div>
<div class="dl" style="top:772.4px"><span class="lc" style="left:123.6px">public static final int </span><span class="uc" style="transform:scaleX(.8807);left:287.6px">BOOK_STATUS_FINISH</span><span class="lc eq" style="left:464.6px"> = 40;</span></div>
<svg style="left:96.5px;top:670px" width="462" height="204" viewBox="0 0 462 204" fill="none"><path d="M3.800 6.600Q3.800 5.200 5.400 5.200L454.800 4.400Q456.600 4.400 456.600 6L456.300 196.600Q456.300 198.200 454.600 198.200L5.600 198.400Q4.200 198.400 4.200 196.800Z" stroke="#ec2a22" stroke-width="3.500" stroke-linejoin="round"/></svg>
<div id="wm">掘金技术社区 @ 狗熊岭在逃翠花</div>
</div>

</div>
</body>
</html>
